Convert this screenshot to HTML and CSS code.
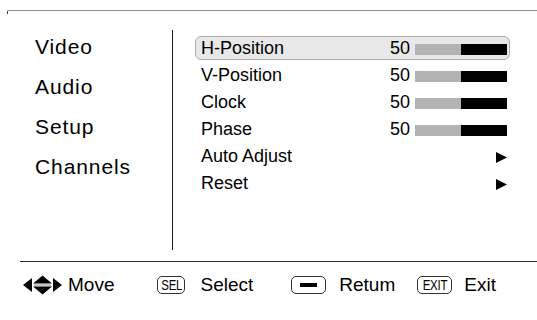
FILE: index.html
```html
<!DOCTYPE html>
<html lang="en">
<head>
<meta charset="utf-8">
<title>Setup menu</title>
<link rel="stylesheet" href="styles.css">
</head>
<body>
<div class="screen">
  <div class="topline"></div>
  <div class="main">
    <div class="nav-col">
      <ul class="nav">
        <li>Video</li>
        <li>Audio</li>
        <li>Setup</li>
        <li>Channels</li>
      </ul>
    </div>
    <div class="panel">
      <div class="row is-active"><span class="label">H-Position</span><span class="val">50</span><span class="bar"><span class="bar-fill"></span></span></div>
      <div class="row"><span class="label">V-Position</span><span class="val">50</span><span class="bar"><span class="bar-fill"></span></span></div>
      <div class="row"><span class="label">Clock</span><span class="val">50</span><span class="bar"><span class="bar-fill"></span></span></div>
      <div class="row"><span class="label">Phase</span><span class="val">50</span><span class="bar"><span class="bar-fill"></span></span></div>
      <div class="row"><span class="label">Auto Adjust</span><svg class="arrow" width="11" height="11" viewBox="0 0 11 11"><polygon points="0,0 11,5.5 0,11" fill="#000"/></svg></div>
      <div class="row"><span class="label">Reset</span><svg class="arrow" width="11" height="11" viewBox="0 0 11 11"><polygon points="0,0 11,5.5 0,11" fill="#000"/></svg></div>
    </div>
  </div>
  <div class="footer">
    <div class="hint hint-move">
      <svg class="move-icon" width="39" height="20" viewBox="0 0 39 20">
        <polygon points="0,10 9,3 9,17" fill="#000"/>
        <polygon points="10,8.5 19.5,0.5 29,8.5" fill="#000"/>
        <rect x="11" y="9.5" width="17" height="1" fill="#888"/>
        <polygon points="10,11.5 19.5,19.5 29,11.5" fill="#000"/>
        <polygon points="39,10 30,3 30,17" fill="#000"/>
      </svg>
      <span class="hint-text">Move</span>
    </div>
    <div class="hint hint-sel">
      <span class="key key-sel"><span class="key-label">SEL</span></span>
      <span class="hint-text">Select</span>
    </div>
    <div class="hint hint-ret">
      <span class="key key-ret"><span class="minus"></span></span>
      <span class="hint-text">Retum</span>
    </div>
    <div class="hint hint-exit">
      <span class="key key-exit"><span class="key-label">EXIT</span></span>
      <span class="hint-text">Exit</span>
    </div>
  </div>
</div>
</body>
</html>
```
FILE: styles.css
```css
html, body {
  margin: 0;
  padding: 0;
  background: #fff;
}

body {
  font-family: "Liberation Sans", Arial, sans-serif;
  color: #000;
}

.screen {
  width: 537px;
  height: 320px;
  overflow: hidden;
}

.topline {
  margin: 10px 0 0 7px;
  height: 3px;
  border-top: 1px solid #8e8e8e;
  border-left: 1px solid #333;
  border-top-left-radius: 2px;
}

.main {
  display: flex;
  margin-top: 16px;
  height: 220px;
}

.nav-col {
  box-sizing: border-box;
  width: 173px;
  padding-left: 35px;
  border-right: 1px solid #1a1a1a;
}

.nav {
  list-style: none;
  margin: -3px 0 0 0;
  padding: 0;
  font-size: 21px;
  line-height: 40px;
  letter-spacing: 0.9px;
}

.panel {
  flex: 1;
  padding: 6px 27px 0 22px;
}

.row {
  box-sizing: border-box;
  display: flex;
  align-items: center;
  height: 24px;
  margin-bottom: 3px;
  padding: 0 2px 0 5px;
  border: 1px solid transparent;
  border-radius: 6px;
  font-size: 18px;
  line-height: 22px;
}

.row.is-active {
  background: #e8e8e8;
  border-color: #adadad;
}

.label {
  flex: 1;
}

.val {
  margin-right: 5px;
}

.bar {
  display: flex;
  justify-content: flex-end;
  width: 92px;
  height: 11px;
  margin-top: 3px;
  background: #b3b3b3;
}

.bar-fill {
  width: 46px;
  background: #000;
}

.arrow {
  display: block;
  margin-top: 2px;
}

.footer {
  margin: 11px 0 0 20px;
  border-top: 1px solid #2a2a2a;
  padding-top: 13px;
  display: flex;
  align-items: center;
  height: 20px;
  font-size: 19px;
}

.hint {
  display: flex;
  align-items: center;
}

.hint-move {
  margin-left: 3px;
  gap: 6px;
}

.hint-sel {
  margin-left: 43px;
  gap: 15px;
}

.hint-ret {
  margin-left: 38px;
  gap: 13px;
}

.hint-exit {
  margin-left: 22px;
  gap: 12px;
}

.move-icon {
  display: block;
}

.key {
  box-sizing: border-box;
  display: flex;
  align-items: center;
  justify-content: center;
  height: 18px;
  border: 1px solid #333;
  border-radius: 5px;
}

.key-sel {
  width: 28px;
}

.key-ret,
.key-exit {
  width: 35px;
}

.key-label {
  display: inline-block;
  font-size: 14px;
  line-height: 16px;
  transform: scaleX(0.82);
  letter-spacing: -0.3px;
}

.minus {
  width: 17px;
  height: 4px;
  background: #000;
}
```
